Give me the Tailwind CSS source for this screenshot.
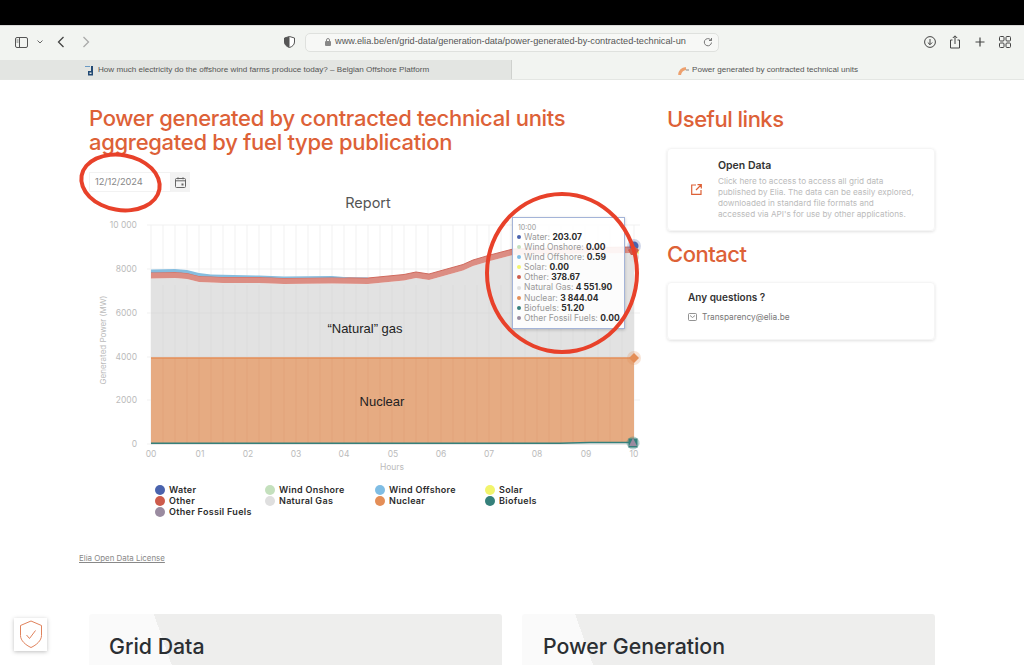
<!DOCTYPE html>
<html lang="en">
<head>
    <meta charset="UTF-8">
    <title>Power generated by contracted technical units</title>
    <script src="https://cdn.jsdelivr.net/npm/@tailwindcss/browser@4"></script>
</head>
<body class="bg-white font-['Inter',sans-serif] overflow-hidden">
<div class="relative w-[1024px] h-[665px] overflow-hidden">
    <!-- Browser chrome -->
    <div class="h-[25px] bg-black"></div>
    <div class="h-[35px] bg-[#f2f4f1] flex items-center px-[14px] pb-[2px] relative border-t border-[#d8d8d8]">
        <svg width="13" height="11" viewBox="0 0 13 11" fill="none" stroke="#555" class="ml-px"><rect x="0.5" y="0.5" width="12" height="10" rx="1.5"/><path d="M4.5 1v9"/><path d="M1.5 3h2M1.5 5h2" stroke-width="0.8"/></svg>
        <svg width="6" height="4" viewBox="0 0 6 4" fill="none" stroke="#666" class="ml-[9px]"><path d="M.5.5l2.5 2.5L5.5.5"/></svg>
        <svg width="8" height="12" viewBox="0 0 8 12" fill="none" stroke="#444" stroke-width="1.3" class="ml-[14px]"><path d="M6.5 1L1.5 6l5 5"/></svg>
        <svg width="8" height="12" viewBox="0 0 8 12" fill="none" stroke="#aaa" stroke-width="1.3" class="ml-[17px]"><path d="M1.5 1l5 5-5 5"/></svg>
        <svg width="11" height="12" viewBox="0 0 11 12" class="ml-[194px]"><path d="M5.5 .5L10.5 2v4c0 3-2.5 4.700-5 5.500C3 10.700 .5 9 .5 6V2z" fill="#fff" stroke="#555"/><path d="M5.500 .5L.5 2v4c0 3 2.500 4.700 5 5.500z" fill="#555"/></svg>
        <div class="ml-[10px] w-[414px] h-[19px] rounded-[5px] bg-[#f7f8f6] border border-[#dfe1de] flex items-center pl-[19px] pr-[5px] text-[9.200px] text-[#555] font-['Liberation_Sans',sans-serif]">
            <svg width="7" height="8" viewBox="0 0 7 8" class="mr-[3px] shrink-0"><rect y="3" width="6" height="5" rx="1" fill="#888"/><path d="M1.500 3V2a1.500 1.500 0 013 0v1" fill="none" stroke="#888"/></svg>
            <span class="whitespace-nowrap flex-1">www.elia.be/en/grid-data/generation-data/power-generated-by-contracted-technical-un</span>
            <svg width="10" height="10" viewBox="0 0 10 10" fill="none" stroke="#777" class="ml-1 shrink-0"><path d="M8.500 5.500a3.600 3.600 0 11-1.200-3L8.500 3.500M8.500 1v2.500H6"/></svg>
        </div>
        <div class="ml-auto flex items-center gap-[13px] -mr-[1px]">
            <svg width="12" height="12" viewBox="0 0 12 12" fill="none" stroke="#444"><circle cx="6" cy="6" r="5.400"/><path d="M6 3v5.500M3.800 6.500L6 8.700l2.200-2.200"/></svg>
            <svg width="12" height="14" viewBox="0 0 12 14" fill="none" stroke="#444"><path d="M3.500 5H1.500v8h9V5H8.500M6 9V1M3.800 3L6 .8 8.200 3"/></svg>
            <svg width="12" height="12" viewBox="0 0 12 12" fill="none" stroke="#444" stroke-width="1.2"><path d="M6 1.500v9M1.500 6h9"/></svg>
            <svg width="12" height="12" viewBox="0 0 12 12" fill="none" stroke="#444"><rect x=".5" y=".5" width="4.500" height="4.500" rx="1"/><rect x="7" y=".5" width="4.500" height="4.500" rx="1"/><rect x=".5" y="7" width="4.500" height="4.500" rx="1"/><rect x="7" y="7" width="4.500" height="4.500" rx="1"/></svg>
        </div>
    </div>
    <div class="h-5 flex text-[8.100px] text-[#555] font-['Liberation_Sans',sans-serif] border-b border-[#e4e6e3]">
        <div class="w-[512px] bg-[#e3e5e2] flex items-center pl-[85px] pt-[2px] border-r border-[#cfd1ce]">
            <svg width="10" height="10" viewBox="0 0 10 10" class="mr-[3px]"><path d="M0 .5h5" stroke="#6a9ac4" fill="none"/><path d="M6 0h2v9.500H3V5h3z" fill="#234a75"/><rect x="4.500" y="6.500" width="2" height="1.500" fill="#e3e5e2"/></svg>
            How much electricity do the offshore wind farms produce today? – Belgian Offshore Platform
        </div>
        <div class="flex-1 bg-[#f2f4f1] flex items-center pl-[166px] pt-[2px]">
            <svg width="11" height="8" viewBox="0 0 11 8" fill="none" class="mr-[3px]"><path d="M1.500 8C2 4.500 4 2 8 1.500" stroke="#eda06e" stroke-width="3"/><path d="M8 3h3" stroke="#888"/></svg>
            Power generated by contracted technical units
        </div>
    </div>

    <!-- Page -->
    <div class="pl-[89px] pr-[89px] flex gap-[27px] pt-[27px]">
        <div class="w-[551px] shrink-0">
            <h1 class="font-medium text-[22px] leading-[23.500px] text-[#dd6137] tracking-[-0.3px]">Power generated by contracted technical units<br>aggregated by fuel type publication</h1>
            <div class="flex h-5 mt-[18px] text-[9.300px] tracking-[-0.1px] text-[#888]">
                <div class="w-[82px] border border-[#f2f2f2] flex items-center pl-[5px]">12/12/2024</div>
                <div class="w-[19px] bg-[#f3f3f3] flex items-center justify-center">
                    <svg width="11" height="11" viewBox="0 0 11 11" fill="none" stroke="#666"><rect x=".5" y="1.500" width="10" height="9" rx="1"/><path d="M.5 3.800h10M3 .3v2M8 .3v2"/><rect x="6.500" y="6.500" width="2" height="2" fill="#666" stroke="none"/></svg>
                </div>
            </div>

            <!-- Chart canvas: viewBox uses page coordinates -->
            <svg width="556" height="290" viewBox="89 190 556 290" class="block -mt-[2px] font-['Inter',sans-serif]">
                <text x="368" y="208" text-anchor="middle" font-size="14.500" fill="#555">Report</text>

                <!-- Grid -->
                <g stroke="#ededed" stroke-width="0.800">
                    <path d="M147 225h493M147 269h493M147 313h493M147 357h493M147 400h493M147 444h493"/>
                    <path d="M151 225v219M163 225v219M175 225v219M187 225v219M199 225v219M211 225v219M223 225v219M235 225v219M247 225v219M259 225v219M271 225v219M284 225v219M296 225v219M308 225v219M320 225v219M332 225v219M344 225v219M356 225v219M368 225v219M380 225v219M392 225v219M404 225v219M416 225v219M428 225v219M441 225v219M453 225v219M465 225v219M477 225v219M489 225v219M501 225v219M513 225v219M525 225v219M537 225v219M549 225v219M561 225v219M573 225v219M585 225v219M598 225v219M610 225v219M622 225v219M634 225v219"/>
                </g>

                <!-- Stacked areas -->
                <path d="M151 278.500L175 278L187 279L199 282L223 283L259 283L284 284L332 283.500L368 284L404 280.500L416 278L429 280L463 270.500L473 266L490 261L513 255L560 254L634 253V358H151Z" fill="#e2e2e2"/>
                <g stroke="#dadada" stroke-width="0.700"><path d="M163 285v73M175 285v73M187 285v73M199 285v73M211 285v73M223 285v73M235 285v73M247 285v73M259 285v73M271 285v73M284 285v73M296 285v73M308 285v73M320 285v73M332 285v73M344 285v73M356 285v73M368 285v73M380 285v73M392 285v73M404 285v73M416 285v73M428 285v73M441 285v73M453 285v73M465 285v73M477 285v73M489 285v73M501 285v73M513 285v73M525 285v73M537 285v73M549 285v73M561 285v73M573 285v73M585 285v73M598 285v73M610 285v73M622 285v73"/></g>
                <path d="M151 313H634M151 357H634" stroke="#dadada" stroke-width="0.700"/>
                <path d="M151 358H634V443H151Z" fill="#e6ab82"/>
                <g stroke="#dfa078" stroke-width="0.700"><path d="M163 358v85M175 358v85M187 358v85M199 358v85M211 358v85M223 358v85M235 358v85M247 358v85M259 358v85M271 358v85M284 358v85M296 358v85M308 358v85M320 358v85M332 358v85M344 358v85M356 358v85M368 358v85M380 358v85M392 358v85M404 358v85M416 358v85M428 358v85M441 358v85M453 358v85M465 358v85M477 358v85M489 358v85M501 358v85M513 358v85M525 358v85M537 358v85M549 358v85M561 358v85M573 358v85M585 358v85M598 358v85M610 358v85M622 358v85"/></g>
                <path d="M151 358H634" stroke="#e48e57" stroke-width="1.500" fill="none"/>
                <!-- Other band -->
                <path d="M151 272.500L175 272L187 273L199 276L223 277L259 277L284 278L332 277.500L368 278L404 274.500L416 272L429 274L463 264.500L473 260L490 255L513 249L560 248L634 247V253L560 254L513 255L490 261L473 266L463 270.500L429 280L416 278L404 280.500L368 284L332 283.500L284 284L259 283L223 283L199 282L187 279L175 278L151 278.500Z" fill="#dc8d83"/>
                <path d="M151 272.500L175 272L187 273L199 276L223 277L259 277L284 278L332 277.500L368 278L404 274.500L416 272L429 274L463 264.500L473 260L490 255L513 249L560 248L634 247" stroke="#d06a5e" fill="none"/>
                <!-- Wind offshore band -->
                <path d="M151 269.500L175 269L187 270L199 273L211 274.500L259 275.500L284 276.500L332 276L350 277.500L368 277.500V278L332 277.500L284 278L259 277L223 277L199 276L187 273L175 272L151 272.500Z" fill="#86bddf"/>
                <!-- Biofuels and bottom axis -->
                <path d="M151 444H634" stroke="#e4e4e4" stroke-width="1.500"/>
                <path d="M151 443.200H560L590 442.500H634" stroke="#35807b" stroke-width="1.500" fill="none"/>

                <!-- End markers -->
                <circle cx="634" cy="246" r="7" fill="#4a63ad" fill-opacity="0.250"/>
                <circle cx="634" cy="246" r="4.500" fill="#4a63ad"/>
                <circle cx="635" cy="252" r="4" fill="#f0ef74"/>
                <circle cx="634" cy="257" r="5" fill="#dfdfdf"/>
                <path d="M634 246l5 4-3 5h-5l-3-5z" fill="#cd5b4b"/>
                <circle cx="634" cy="358" r="7" fill="#e48e57" fill-opacity="0.250"/>
                <path d="M634 353l5 5-5 5-5-5z" fill="#e48e57"/>
                <circle cx="633" cy="443" r="6.500" fill="#35807b" fill-opacity="0.350"/>
                <rect x="628.500" y="438.500" width="9" height="9" fill="#35807b"/>
                <path d="M633 438l4 8h-8z" fill="#9a8ba0"/>

                <!-- Axis labels -->
                <g font-size="8.500" fill="#bbb" text-anchor="end">
                    <text x="137" y="228">10 000</text>
                    <text x="137" y="272">8000</text>
                    <text x="137" y="316">6000</text>
                    <text x="137" y="360">4000</text>
                    <text x="137" y="403">2000</text>
                    <text x="137" y="447">0</text>
                </g>
                <g font-size="8.500" fill="#bbb" text-anchor="middle">
                    <text x="151" y="457">00</text><text x="200" y="457">01</text><text x="248" y="457">02</text>
                    <text x="296" y="457">03</text><text x="344" y="457">04</text><text x="393" y="457">05</text>
                    <text x="441" y="457">06</text><text x="489" y="457">07</text><text x="537" y="457">08</text>
                    <text x="586" y="457">09</text><text x="634" y="457">10</text>
                    <text x="392" y="470">Hours</text>
                </g>
                <text transform="translate(106 340) rotate(-90)" font-size="8" fill="#bbb" text-anchor="middle">Generated Power (MW)</text>

                <text x="365" y="333" text-anchor="middle" font-size="13" fill="#222" font-family="Liberation Sans">“Natural” gas</text>
                <text x="382" y="406" text-anchor="middle" font-size="13" fill="#222" font-family="Liberation Sans">Nuclear</text>
            </svg>

            <!-- Legend -->
            <div class="grid grid-cols-[repeat(4,110px)] ml-[66px] mt-[5px] text-[9px] leading-[10.800px] font-semibold text-[#2c2c2c] tracking-[0.3px]">
                <div class="flex items-center gap-[4px]"><span class="size-[10px] rounded-full bg-[#4a63ad]"></span>Water</div>
                <div class="flex items-center gap-[4px]"><span class="size-[10px] rounded-full bg-[#c4e0bd]"></span>Wind Onshore</div>
                <div class="flex items-center gap-[4px]"><span class="size-[10px] rounded-full bg-[#7fbde4]"></span>Wind Offshore</div>
                <div class="flex items-center gap-[4px]"><span class="size-[10px] rounded-full bg-[#f2f46c]"></span>Solar</div>
                <div class="flex items-center gap-[4px]"><span class="size-[10px] rounded-full bg-[#cd5b4b]"></span>Other</div>
                <div class="flex items-center gap-[4px]"><span class="size-[10px] rounded-full bg-[#dfdfdf]"></span>Natural Gas</div>
                <div class="flex items-center gap-[4px]"><span class="size-[10px] rounded-full bg-[#e48e57]"></span>Nuclear</div>
                <div class="flex items-center gap-[4px]"><span class="size-[10px] rounded-full bg-[#35807b]"></span>Biofuels</div>
                <div class="flex items-center gap-[4px] whitespace-nowrap"><span class="size-[10px] rounded-full bg-[#9a8ba0]"></span>Other Fossil Fuels</div>
            </div>

            <a class="block -ml-[10px] mt-[36px] text-[7.900px] text-[#888] underline">Elia Open Data License</a>
        </div>

        <!-- Right column -->
        <div class="w-[268px] shrink-0">
            <h2 class="font-medium text-[22px] leading-[24px] text-[#dd6137] tracking-[-0.5px]">Useful links</h2>
            <div class="mt-[17px] h-[83px] rounded-[4px] border border-[#f5f5f5] shadow-[0_1px_3px_rgba(0,0,0,0.12)] flex items-center">
                <svg width="11" height="11" viewBox="0 0 11 11" fill="none" stroke="#dd6137" stroke-width="1.200" class="ml-[23px] shrink-0"><path d="M5 1H.7v9.300H10V6M6.500.7h3.800v3.800M10 1L5 6"/></svg>
                <div class="ml-[16px]">
                    <div class="text-[10.500px] leading-[12px] font-semibold text-[#333]">Open Data</div>
                    <p class="mt-[4px] text-[8.200px] leading-[11px] text-[#bbb] whitespace-nowrap">Click here to access to access all grid data<br>published by Elia. The data can be easily explored,<br>downloaded in standard file formats and<br>accessed via API's for use by other applications.</p>
                </div>
            </div>
            <h2 class="mt-[11px] font-medium text-[22px] leading-[24px] text-[#dd6137] tracking-[-0.5px]">Contact</h2>
            <div class="mt-[16px] h-[58px] rounded-[4px] border border-[#f5f5f5] shadow-[0_1px_3px_rgba(0,0,0,0.12)] pl-5 pt-[8px]">
                <div class="text-[10px] leading-[12px] font-semibold text-[#333]">Any questions ?</div>
                <div class="mt-[8px] flex items-center gap-[5px] text-[8.300px] text-[#777]">
                    <svg width="9" height="8" viewBox="0 0 9 8" fill="none" stroke="#777" stroke-width="0.800"><rect x=".5" y=".5" width="8" height="7" rx="1"/><path d="M2 2.500l2.500 2 2.500-2"/></svg>
                    Transparency@elia.be
                </div>
            </div>
        </div>
    </div>

    <!-- Bottom cards -->
    <div class="absolute left-[89px] top-[614px] w-[413px] h-[60px] rounded-[3px] bg-[linear-gradient(70.600deg,#fafafa_81px,#eeeeed_81px)] pl-[20px] pt-[17px] text-[21.300px] font-medium text-[#2b2f33]">Grid Data</div>
    <div class="absolute left-[522px] top-[614px] w-[413px] h-[60px] rounded-[3px] bg-[linear-gradient(70.600deg,#fafafa_70px,#eeeeed_70px)] pl-[21px] pt-[17px] text-[21.300px] font-medium text-[#2b2f33]">Power Generation</div>

    <!-- Privacy badge -->
    <div class="absolute left-[14px] top-[618px] size-[33px] bg-white shadow-[0_1px_4px_rgba(0,0,0,0.25)] flex items-center justify-center">
        <svg width="24" height="29" viewBox="0 0 24 29" fill="none" stroke="#e0825c" stroke-width="1"><path d="M12 1l10.500 4.500v10c0 5-5 9.500-10.500 12C6.500 25 1.500 20.500 1.500 15.500v-10z"/><path d="M7.500 15l3 3.500 6-8"/></svg>
    </div>

    <!-- Tooltip -->
    <div class="absolute left-[512px] top-[217px] w-[113px] h-[112px] bg-white/90 border border-[#a4b4d8] shadow-[0_1px_3px_rgba(0,0,0,0.2)] pl-[4px] pt-[5px] text-[8.500px] leading-[10.100px] text-[#999] whitespace-nowrap">
        <div class="text-[7px] leading-[9px] pl-px">10:00</div>
        <div class="flex items-center gap-[3px]"><span class="size-[4px] rounded-full bg-[#4a63ad]"></span><span>Water: <b class="text-[#2c2c2c]">203.07</b></span></div>
        <div class="flex items-center gap-[3px]"><span class="size-[4px] rounded-full bg-[#c4e0bd]"></span><span>Wind Onshore: <b class="text-[#2c2c2c]">0.00</b></span></div>
        <div class="flex items-center gap-[3px]"><span class="size-[4px] rounded-full bg-[#7fbde4]"></span><span>Wind Offshore: <b class="text-[#2c2c2c]">0.59</b></span></div>
        <div class="flex items-center gap-[3px]"><span class="size-[4px] rounded-full bg-[#f2f46c]"></span><span>Solar: <b class="text-[#2c2c2c]">0.00</b></span></div>
        <div class="flex items-center gap-[3px]"><span class="size-[4px] rounded-full bg-[#cd5b4b]"></span><span>Other: <b class="text-[#2c2c2c]">378.67</b></span></div>
        <div class="flex items-center gap-[3px]"><span class="size-[4px] rounded-full bg-[#dfdfdf]"></span><span>Natural Gas: <b class="text-[#2c2c2c]">4 551.90</b></span></div>
        <div class="flex items-center gap-[3px]"><span class="size-[4px] rounded-full bg-[#e48e57]"></span><span>Nuclear: <b class="text-[#2c2c2c]">3 844.04</b></span></div>
        <div class="flex items-center gap-[3px]"><span class="size-[4px] rounded-full bg-[#35807b]"></span><span>Biofuels: <b class="text-[#2c2c2c]">51.20</b></span></div>
        <div class="flex items-center gap-[3px]"><span class="size-[4px] rounded-full bg-[#9a8ba0]"></span><span>Other Fossil Fuels: <b class="text-[#2c2c2c]">0.00</b></span></div>
    </div>

    <!-- Hand-drawn red circles -->
    <div class="absolute left-[79px] top-[153px] w-[83px] h-[59px] rounded-[50%] rotate-[10deg] border-[4px] border-[#e8412a]"></div>
    <div class="absolute left-[485px] top-[192px] w-[154px] h-[162px] rounded-[50%] border-[4px] border-[#e8412a]"></div>
</div>
</body>
</html>
